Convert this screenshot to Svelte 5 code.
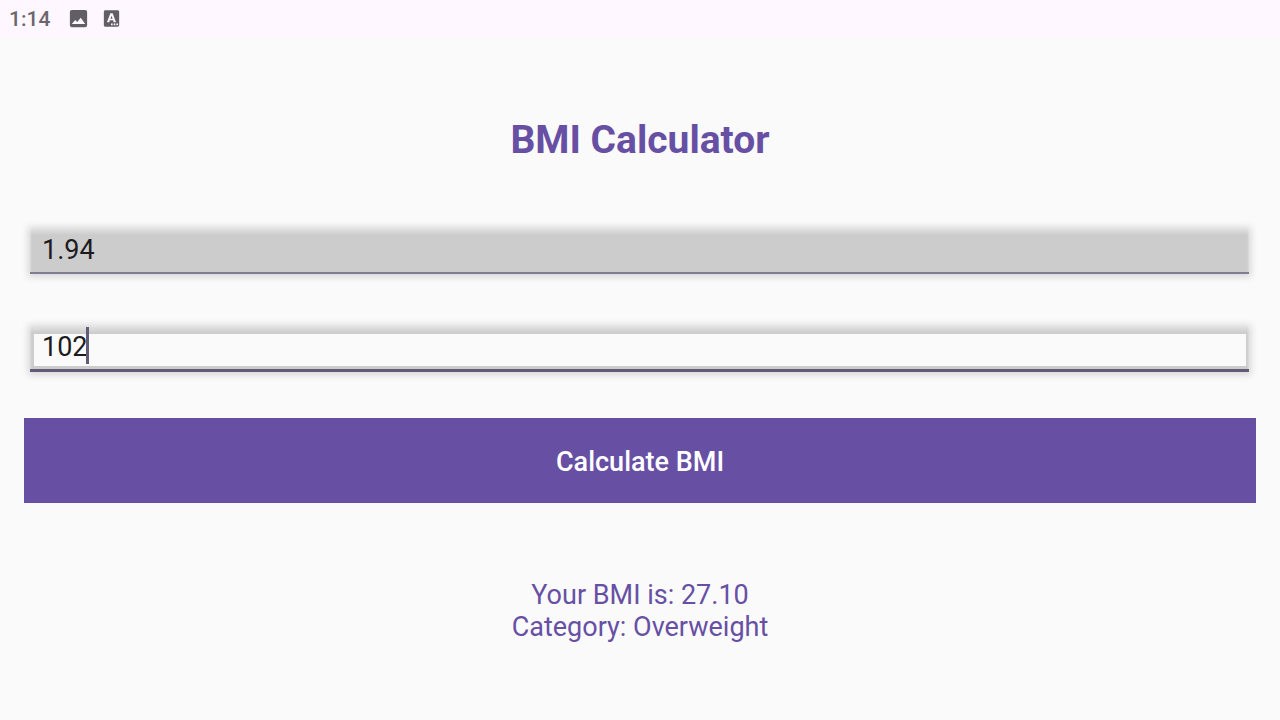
<script>
  let height = $state('1.94');
  let weight = $state('102');
  let bmi = $state(102 / (1.94 * 1.94));

  const category = $derived(
    bmi < 18.5 ? 'Underweight' : bmi < 25 ? 'Normal' : bmi < 30 ? 'Overweight' : 'Obese'
  );

  function calculate(event) {
    event.preventDefault();
    const h = Number(height);
    const w = Number(weight);
    if (h > 0 && w > 0) bmi = w / (h * h);
  }
</script>

<header class="status">
  <time>1:14</time>
  <svg class="icon" viewBox="0 0 24 24" aria-hidden="true">
    <path d="M21 19V5c0-1.100-.9-2-2-2H5c-1.100 0-2 .9-2 2v14c0 1.100.9 2 2 2h14c1.100 0 2-.9 2-2zM5 17.800l3.600-4.300 2.100 2.200L14.300 11.200l4.700 6.600z" />
  </svg>
  <svg class="icon" viewBox="0 0 24 24" aria-hidden="true">
    <path fill-rule="evenodd" d="M5.500 3.500h13c.8 0 1.500.7 1.500 1.500v14c0 .8-.7 1.500-1.500 1.500h-13c-.8 0-1.500-.7-1.500-1.500V5c0-.8.7-1.500 1.500-1.500zM10.800 6.500L7.300 15.800h2.400l.6-1.900h3.400l.6 1.900h2.400L13.200 6.500zM12 9l1.100 3.300h-2.200zM11.500 17.300v1.700h1.700v-1.700zM14.300 17.300v1.700H16v-1.700zM17.100 17.300v1.700h1.700v-1.700z" />
  </svg>
</header>

<main>
  <h1>BMI Calculator</h1>
  <form onsubmit={calculate}>
    <div class="field filled">
      <input aria-label="Height" inputmode="decimal" bind:value={height} />
    </div>
    <div class="field active">
      <input aria-label="Weight" inputmode="decimal" bind:value={weight} />
      <span class="caret"></span>
    </div>
    <button type="submit">Calculate BMI</button>
  </form>
  <p class="result">Your BMI is: {bmi.toFixed(2)}<br />Category: {category}</p>
</main>

<style>
  :global(body) {
    background: #fafafa;
    font-family: Roboto, sans-serif;
  }

  .status {
    display: flex;
    align-items: center;
    gap: 10px;
    height: 37px;
    padding-left: 9px;
    background: #fef7ff;
    color: #625e65;
  }

  time {
    margin-right: 7px;
    color: #6a666d;
    font-size: 21px;
    font-weight: 500;
    line-height: 24px;
  }

  .icon {
    width: 23px;
    height: 23px;
    fill: currentColor;
  }

  main {
    padding: 79px 24px 24px;
  }

  h1 {
    margin: 0;
    color: #6750a4;
    font-size: 39px;
    font-weight: 700;
    line-height: 48px;
    text-align: center;
  }

  form {
    display: flex;
    flex-direction: column;
    margin-top: 64px;
  }

  .field {
    position: relative;
    display: flex;
    height: 46px;
    margin: 0 7px 52px 6px;
    background: linear-gradient(#e4e4e4, #cccccc 7px);
    box-shadow:
      0 1px 7px 2px rgba(0, 0, 0, 0.14),
      inset 2px 0 2px -1px rgba(250, 250, 250, 0.4),
      inset -2px 0 2px -1px rgba(250, 250, 250, 0.4);
  }

  input {
    position: relative;
    box-sizing: border-box;
    width: 100%;
    min-width: 0;
    padding: 0 12px;
    border: 0;
    border-radius: 0;
    outline: 0;
    background: transparent;
    color: #1d1b20;
    font: 400 27px/32px Roboto, sans-serif;
  }

  .filled input {
    border-bottom: 2px solid #817c96;
  }

  .active {
    margin-bottom: 46px;
  }

  /* Clear area inside the focused field's shaded frame */
  .active::before {
    position: absolute;
    inset: 8px 3px 6px 4px;
    background: #fafafa;
    content: '';
  }

  .active input {
    padding-bottom: 2px;
    border-bottom: 3px solid #625b77;
    caret-color: transparent;
  }

  .caret {
    position: absolute;
    top: 1px;
    left: 56px;
    width: 3px;
    height: 37px;
    background: #625b77;
  }

  button {
    height: 85px;
    padding: 2px 24px 0;
    border: 0;
    border-radius: 0;
    background: #6750a4;
    color: #ffffff;
    font: 500 27px/32px Roboto, sans-serif;
  }

  .result {
    margin: 76px 0 0;
    color: #6750a4;
    font-size: 27px;
    line-height: 32px;
    text-align: center;
  }
</style>
